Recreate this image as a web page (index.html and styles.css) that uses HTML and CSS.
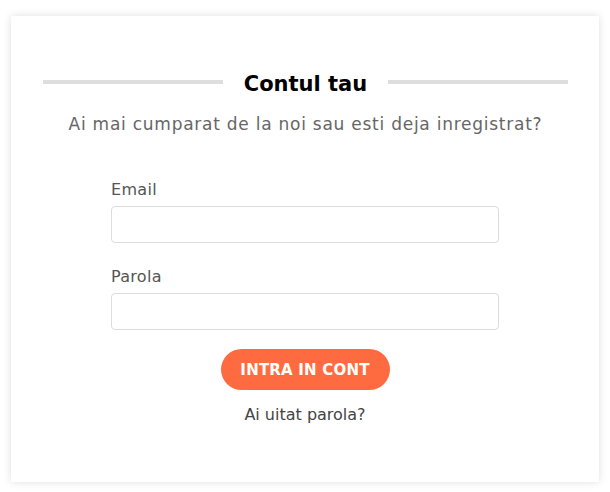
FILE: index.html
```html
<!DOCTYPE html>
<html lang="ro">
<head>
<meta charset="utf-8">
<link rel="stylesheet" href="styles.css">
</head>
<body>
<div class="page">
  <div class="card">
    <div class="heading">
      <span class="rule"></span>
      <h1 class="title">Contul tau</h1>
      <span class="rule"></span>
    </div>
    <p class="subtitle">Ai mai cumparat de la noi sau esti deja inregistrat?</p>
    <form class="form">
      <label class="label" for="email">Email</label>
      <input class="input" id="email" type="text">
      <label class="label label-second" for="parola">Parola</label>
      <input class="input" id="parola" type="password">
      <div class="actions">
        <button class="btn" type="button">INTRA IN CONT</button>
        <a class="forgot" href="#">Ai uitat parola?</a>
      </div>
    </form>
  </div>
</div>
</body>
</html>
```

FILE: styles.css
```css
* { box-sizing: border-box; }
html, body { margin: 0; padding: 0; background: #fff; }
body { font-family: "DejaVu Sans", "Open Sans", sans-serif; }
.page { padding: 16px 11px 10px 11px; }
.card {
  width: 588px;
  height: 466px;
  background: #fff;
  box-shadow: 0 0 8px rgba(0,0,0,0.13);
  padding: 51px 31px 0 32px;
}
.heading { display: flex; align-items: center; gap: 21px; height: 30px; }
.rule { flex: 1; height: 4px; background: #dedede; }
.title { margin: 0; padding-top: 3px; font-size: 21px; line-height: 30px; font-weight: 700; color: #000; }
.subtitle {
  margin: 15px 0 0 0;
  text-align: center;
  font-size: 17px;
  letter-spacing: 0.75px;
  line-height: 24px;
  color: #666;
}
.form { width: 388px; margin: 44px 0 0 68px; display: flex; flex-direction: column; }
.label { font-size: 16px; letter-spacing: 0.3px; line-height: 20px; color: #555; }
.label-second { margin-top: 24px; }
.input {
  margin-top: 6px;
  height: 37px;
  border: 1px solid #dcdcdc;
  border-radius: 4px;
  background: #fff;
}
.actions { display: flex; flex-direction: column; align-items: center; margin-top: 19px; }
.btn {
  width: 169px;
  height: 41px;
  padding-top: 2px;
  border: none;
  border-radius: 21px;
  background: #ff6b40;
  color: #fff;
  font-family: inherit;
  font-weight: 700;
  font-size: 15px;
  letter-spacing: 0.2px;
}
.forgot { margin-top: 15px; font-size: 16px; line-height: 20px; color: #444; text-decoration: none; }
```
